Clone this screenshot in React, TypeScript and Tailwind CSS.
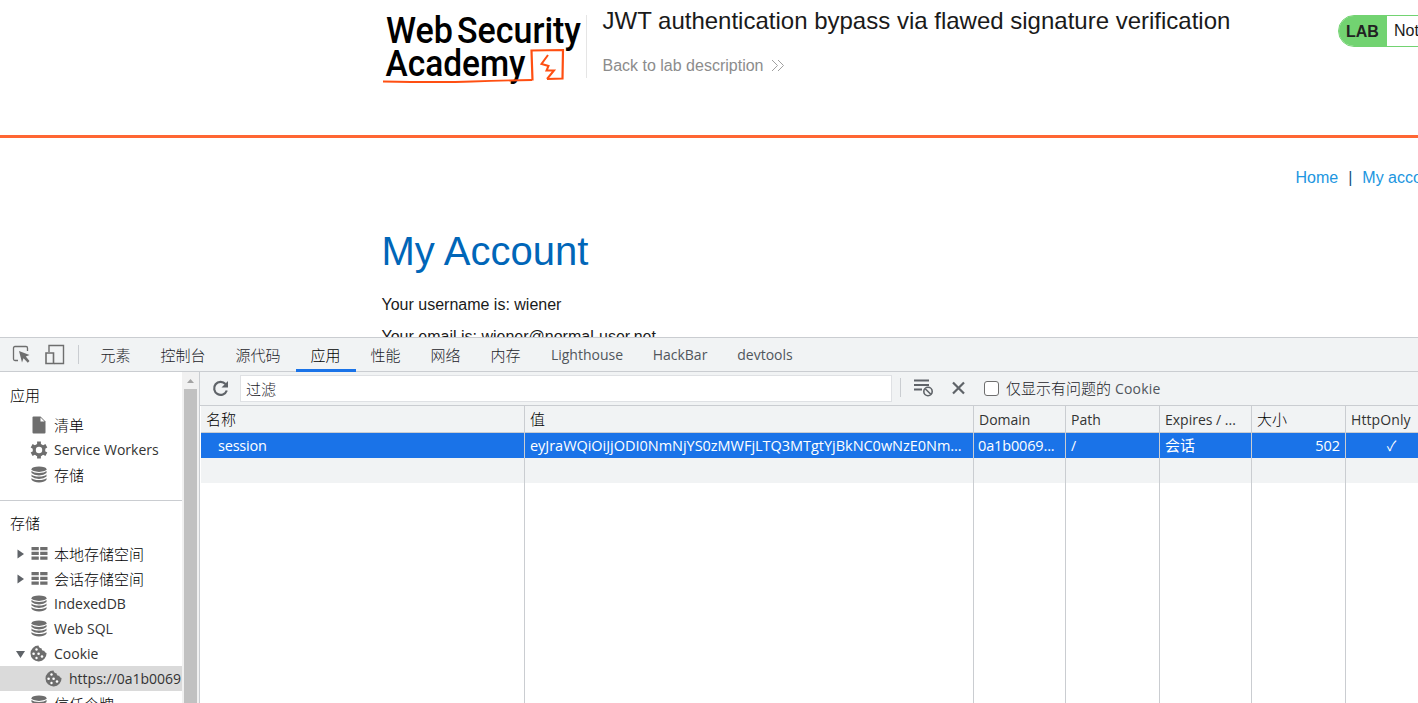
import React from 'react'

const cjkText = 'text-[15px] font-light'

const tabs = [
  { label: '元素', width: 'w-[60px]', text: cjkText },
  { label: '控制台', width: 'w-[75px]', text: cjkText },
  { label: '源代码', width: 'w-[75px]', text: cjkText },
  { label: '应用', width: 'w-[60px]', text: cjkText, active: true },
  { label: '性能', width: 'w-[60px]', text: cjkText },
  { label: '网络', width: 'w-[60px]', text: cjkText },
  { label: '内存', width: 'w-[60px]', text: cjkText },
  { label: 'Lighthouse', width: 'w-[103px]', text: 'text-[#50565c]' },
  { label: 'HackBar', width: 'w-[83px]', text: 'text-[#50565c]' },
  { label: 'devtools', width: 'w-[87px]', text: 'text-[#50565c]' },
]

const columns = [
  { title: '名称', value: 'session', width: 'w-[324px]', head: 'text-[15px] font-light text-black', cell: 'pl-[17px] tracking-[-0.2px] text-[14.5px]' },
  {
    title: '值',
    value: 'eyJraWQiOiJjODI0NmNjYS0zMWFjLTQ3MTgtYjBkNC0wNzE0Nm...',
    width: 'w-[449px]',
    head: 'text-[15px] font-light text-black',
    cell: 'pl-[5px] text-[14.5px] tracking-[-0.03px]',
  },
  { title: 'Domain', value: '0a1b0069...', width: 'w-[92px]', head: 'text-[#333]', cell: 'pl-[4px] tracking-[-0.15px] text-[14.5px]' },
  { title: 'Path', value: '/', width: 'w-[94px]', head: 'text-[#333]', cell: 'pl-[5px]' },
  { title: 'Expires / ...', value: '会话', width: 'w-[92px]', head: 'text-[#333]', cell: 'pl-[5px] text-[15px]' },
  { title: '大小', value: '502', width: 'w-[94px]', head: 'text-[15px] font-light text-black', cell: 'pr-[5px] text-right text-[14.5px]' },
  { title: 'HttpOnly', value: '✓', width: 'w-[92px]', head: 'text-[#333] tracking-[0.1px]', cell: 'text-center' },
]

const Logo: React.FC = () => (
  <svg width="204" height="80" viewBox="0 0 204 80" className="block">
    <g fontFamily="Roboto" fontWeight="500" fontSize="37.5" fill="#000">
      <text x="4" y="36" textLength="67" lengthAdjust="spacingAndGlyphs">Web</text>
      <text x="75" y="36" textLength="124" lengthAdjust="spacingAndGlyphs">Security</text>
      <text x="3.5" y="69" textLength="140" lengthAdjust="spacingAndGlyphs">Academy</text>
    </g>
    <g fill="none" stroke="#ff4f12">
      <path d="M1 74.500Q60 75.500 90 74.500T150 73" strokeWidth="1.800" />
      <path d="M150.500 73.500L149.500 43.500L181 43L180.500 71.500L165 72" strokeWidth="2.200" />
      <path d="M166 48L159.500 57L166.500 59L164.500 63.500L172 63.500L165 72" strokeWidth="2" />
    </g>
  </svg>
)

const DatabaseIcon: React.FC = () => (
  <svg width="16" height="17" viewBox="0 0 16 17" fill="#6e6e6e">
    <ellipse cx="8" cy="3.200" rx="7.500" ry="2.700" />
    <path d="M.5 4.800Q2.500 7 8 7T15.500 4.800V7Q13 9.400 8 9.400T.5 7Z" />
    <path d="M.5 8.500Q2.500 10.500 8 10.500T15.500 8.500V10.500Q13 12.900 8 12.900T.5 10.500Z" />
    <path d="M.5 12Q2.500 14 8 14T15.500 12V13.800Q13 16.400 8 16.400T.5 13.800Z" />
  </svg>
)

const TableIcon: React.FC = () => (
  <svg width="17" height="15" viewBox="0 0 17 15" fill="#6e6e6e">
    <path d="M.5 1H7.800V4.200H.5ZM9.200 1H16.500V4.200H9.200ZM.5 5.800H7.800V9H.5ZM9.200 5.800H16.500V9H9.200ZM.5 10.600H7.800V13.800H.5ZM9.200 10.600H16.500V13.800H9.200Z" />
  </svg>
)

const CookieIcon: React.FC = () => (
  <svg width="17" height="17" viewBox="0 0 17 17">
    <path
      d="M8.500 .5C9 2.500 10 3.500 11.500 3.200C11.500 5 13 6 14.200 5.800C14.500 7 15.500 7.800 16.500 8A8 8 0 1 1 8.500 .5Z"
      fill="#6e6e6e"
    />
    <g fill="#fff">
      <circle cx="6.500" cy="4.500" r="1.200" />
      <circle cx="3.600" cy="8.800" r="1.300" />
      <circle cx="8.600" cy="8.800" r="1.300" />
      <circle cx="6.500" cy="13" r="1.200" />
      <circle cx="12" cy="11.500" r="1.300" />
    </g>
  </svg>
)

const FileIcon: React.FC = () => (
  <svg width="14" height="18" viewBox="0 0 14 18">
    <path d="M1.500 .5H8.500L13.500 5.500V16.500Q13.500 17.500 12.500 17.500H1.500Q.5 17.500 .5 16.500V1.500Q.5 .5 1.500 .5Z" fill="#6e6e6e" />
    <path d="M8.500 1.500V5.500H12.500Z" fill="#fff" />
  </svg>
)

const GearIcon: React.FC = () => (
  <svg width="18" height="18" viewBox="0 0 18 18">
    <g stroke="#6e6e6e" strokeWidth="3.800">
      <path d="M9 .5V17.500M1.640 4.750L16.360 13.250M1.640 13.250L16.360 4.750" />
    </g>
    <circle cx="9" cy="9" r="6.300" fill="#6e6e6e" />
    <circle cx="9" cy="9" r="3.200" fill="#fff" />
  </svg>
)

type RowProps = {
  icon: React.ReactNode
  label: string
  cjk?: boolean
  arrow?: 'right' | 'down'
  child?: boolean
}

const Row: React.FC<RowProps> = ({ icon, label, cjk, arrow, child }) => (
  <div
    className={`flex h-[25px] shrink-0 items-center overflow-hidden ${child ? 'bg-[#dadada] pl-[28px]' : 'pl-[13px]'}`}
  >
    <span className="flex w-[13px] shrink-0 justify-center">
      {arrow && (
        <svg width="10" height="10" viewBox="0 0 10 10" fill="#5f6368">
          <path d={arrow === 'right' ? 'M2.500 .5L9 5L2.500 9.500Z' : 'M1 2H10L5.500 9Z'} />
        </svg>
      )}
    </span>
    <span className={`flex w-[20px] shrink-0 justify-center ${child || arrow === 'down' ? 'mr-px ml-[2px]' : 'ml-[3px]'}`}>
      {icon}
    </span>
    <span className={cjk ? 'ml-[5px] text-[15px] font-light text-black' : 'ml-[5px]'}>{label}</span>
  </div>
)

const LabPage: React.FC = () => (
  <div className="h-[337px] overflow-hidden font-['Liberation_Sans',sans-serif] text-base leading-6 text-[#1a1a1a]">
    <header className="flex h-[138px] border-b-[3px] border-[#ff6633] pl-[382px]">
      <div className="h-[78px] w-[204px] shrink-0 pt-[7px]">
        <Logo />
      </div>
      <div className="mt-[15px] h-[63px] w-px shrink-0 bg-[#e5e5e5]" />
      <div className="ml-[15.5px] w-[735.5px] shrink-0 pt-[5px]">
        <h2 className="text-2xl leading-8 whitespace-nowrap">
          JWT authentication bypass via flawed signature verification
        </h2>
        <a className="mt-[17px] flex items-center text-[#8c8c8c]">
          Back to lab description
          <svg width="14" height="13" viewBox="0 0 14 13" fill="none" stroke="#a0a0a0" className="mb-px ml-[8px]">
            <path d="M1 1L6.500 6.500L1 12M7 1L12.500 6.500L7 12" />
          </svg>
        </a>
      </div>
      <div className="mt-[15px] flex h-8 w-[140px] shrink-0 overflow-hidden rounded-l-2xl border border-[#72d371] leading-[31px]">
        <span className="w-12 shrink-0 bg-[#72d371] pl-[7px] font-bold text-[#222]">LAB</span>
        <span className="pl-[7px] leading-[30px] whitespace-nowrap">Not solved</span>
      </div>
    </header>
    <nav className="flex pt-[28px] pl-[1295.5px] whitespace-nowrap text-[#2196df]">
      <a>Home</a>
      <span className="mx-[10px] text-[#14507d]">|</span>
      <a>My account</a>
    </nav>
    <main className="pl-[381.5px]">
      <h1 className="mt-[37px] text-[40px] leading-[48px] text-[#0066b8]">My Account</h1>
      <p className="mt-[18px]">Your username is: wiener</p>
      <p className="mt-[8px]">Your email is: wiener@normal-user.net</p>
    </main>
  </div>
)

const DevToolsTabs: React.FC = () => (
  <div className="flex h-[35px] shrink-0 border-y border-[#cacdd1] bg-[#f1f3f4] text-[#1c232a]">
    <svg width="86" height="33" viewBox="0 0 86 33" fill="none" className="shrink-0">
      <path d="M18 22.500H15Q13.500 22.500 13.500 21V10Q13.500 8.500 15 8.500H26Q27.500 8.500 27.500 10V13" stroke="#6e6e6e" strokeWidth="1.300" />
      <path d="M19 13L29.500 17L25.800 18.500L29.500 23L27.800 24.800L23.500 20.300L22 24.500Z" fill="#6e6e6e" />
      <path d="M49 14V7.500H63.500V25.500H54" stroke="#6e6e6e" strokeWidth="1.400" />
      <path d="M46 15H53.500V25.500H46Z" stroke="#6e6e6e" strokeWidth="1.600" />
      <path d="M78.500 7V26" stroke="#cacdd1" />
    </svg>
    {tabs.map((tab) => (
      <div
        key={tab.label}
        className={`flex h-[34px] shrink-0 items-center justify-center border-b-[3px] pt-[2px] pr-px ${tab.width} ${tab.text} ${
          tab.active ? 'relative border-[#1a73e8] text-black' : 'border-transparent'
        }`}
      >
        {tab.label}
      </div>
    ))}
  </div>
)

const Sidebar: React.FC = () => (
  <div className="flex w-[200px] shrink-0 border-r border-[#cacdd1] text-[#333]">
    <div className="flex w-[182px] flex-col overflow-hidden whitespace-nowrap">
      <div className="mt-[10px] h-[25px] shrink-0 pl-[10px] text-[15px] leading-[26px] font-light text-black">应用</div>
      <div className="mt-[5px]">
        <Row icon={<FileIcon />} label="清单" cjk />
        <Row icon={<GearIcon />} label="Service Workers" />
        <Row icon={<DatabaseIcon />} label="存储" cjk />
      </div>
      <div className="mt-[13px] h-px shrink-0 bg-[#cacdd1]" />
      <div className="mt-[10px] h-[25px] shrink-0 pl-[10px] text-[15px] leading-[25px] font-light text-black">存储</div>
      <div className="mt-[5px]">
        <Row icon={<TableIcon />} label="本地存储空间" cjk arrow="right" />
        <Row icon={<TableIcon />} label="会话存储空间" cjk arrow="right" />
        <Row icon={<DatabaseIcon />} label="IndexedDB" />
        <Row icon={<DatabaseIcon />} label="Web SQL" />
        <Row icon={<CookieIcon />} label="Cookie" arrow="down" />
        <Row icon={<CookieIcon />} label="https://0a1b0069" child />
        <Row icon={<DatabaseIcon />} label="信任令牌" cjk />
      </div>
    </div>
    <div className="flex w-[17px] flex-col items-center bg-[#f1f1f1]">
      <svg width="17" height="17" viewBox="0 0 17 17" className="shrink-0">
        <path d="M5 11L8.500 7L12 11Z" fill="#a3a3a3" />
      </svg>
      <div className="w-[13px] flex-1 bg-[#c1c1c1]" />
    </div>
  </div>
)

const FilterBar: React.FC = () => (
  <div className="flex h-[34px] shrink-0 items-center border-b border-[#cacdd1] bg-[#f1f3f4] text-[15px] font-light text-[#1c232a]">
    <svg width="40" height="32" viewBox="0 0 40 32" fill="none" className="shrink-0">
      <path d="M25.500 11A6.500 6.500 0 1 0 26.800 17.500" stroke="#5f6368" strokeWidth="2.200" />
      <path d="M28 8V14.500H21.500Z" fill="#5f6368" />
    </svg>
    <div className="mb-px flex h-[27px] w-[652px] items-center border border-[#dfe1e4] bg-white pt-[2px] pl-[5px]">
      过滤
    </div>
    <svg width="91" height="33" viewBox="0 0 91 33" fill="none" className="shrink-0" stroke="#5f6368">
      <path d="M8.500 6V25" stroke="#cacdd1" />
      <path d="M22 8.500H37M22 13H37M22 17.500H30" strokeWidth="2" />
      <circle cx="36" cy="19.500" r="4.200" strokeWidth="1.600" />
      <path d="M33.200 16.700L38.800 22.300" strokeWidth="1.600" />
      <path d="M61 10.500L72 21.500M72 10.500L61 21.500" strokeWidth="2.200" />
    </svg>
    <div className="ml-[1px] h-[15px] w-[15px] shrink-0 rounded-[3px] border border-[#6e6e6e] bg-white" />
    <span className="mb-px ml-[7px] whitespace-nowrap">
      仅显示有问题的 <span className="text-[14px] font-normal tracking-[0.2px] text-[#50565c]">Cookie</span>
    </span>
  </div>
)

const CookieTable: React.FC = () => (
  <div className="flex min-h-0 flex-1 overflow-hidden pl-px">
    {columns.map((col) => (
      <div key={col.title} className={`flex shrink-0 flex-col border-r border-[#cacdd1] whitespace-nowrap ${col.width}`}>
        <div className={`h-[27px] border-b border-[#cacdd1] bg-[#f1f3f4] pl-[5px] leading-[27px] ${col.head}`}>
          {col.title}
        </div>
        <div className={`h-[25px] bg-[#1a73e8] leading-[25px] text-white ${col.cell}`}>{col.value}</div>
        <div className="h-[25px] bg-[#f1f3f4]" />
      </div>
    ))}
  </div>
)

const App: React.FC = () => {
  return (
    <div className="flex h-[703px] w-[1418px] flex-col overflow-hidden bg-white">
      <LabPage />
      <section className="flex min-h-0 flex-1 flex-col font-['Open_Sans','Noto_Sans_CJK_SC',sans-serif] text-[14px] leading-5">
        <DevToolsTabs />
        <div className="flex min-h-0 flex-1">
          <Sidebar />
          <div className="flex min-w-0 flex-1 flex-col">
            <FilterBar />
            <CookieTable />
          </div>
        </div>
      </section>
    </div>
  )
}

export default App
